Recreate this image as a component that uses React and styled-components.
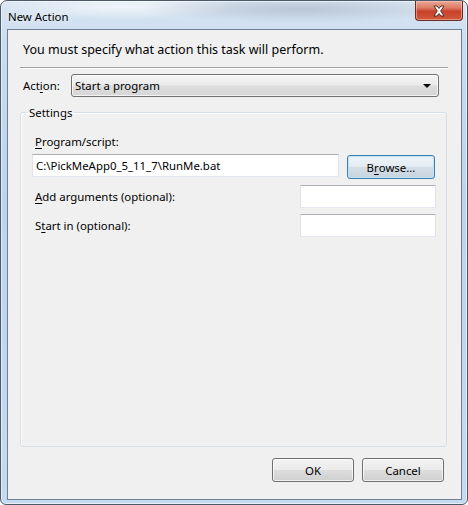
import styled, { createGlobalStyle } from 'styled-components';

const GlobalStyle = createGlobalStyle`
  html, body {
    margin: 0;
    padding: 0;
    background: #ffffff;
  }
  body {
    font-family: "Noto Sans", "Open Sans", sans-serif;
    font-size: 11.4px;
    color: #000;
  }
`;

const Window = styled.div`
  box-sizing: border-box;
  width: 468px;
  height: 505px;
  border: 1px solid #4b5a6b;
  border-radius: 7px 7px 6px 6px;
  padding: 0 5px 4px 6px;
  display: flex;
  flex-direction: column;
  background:
    radial-gradient(ellipse 160px 14px at 300px 8px, rgba(150, 160, 175, 0.45), transparent),
    radial-gradient(ellipse 120px 12px at 120px 6px, rgba(255, 255, 255, 0.6), transparent),
    linear-gradient(180deg, #dbe7f3 0%, #c9dcef 8%, #bdd4ec 40%, #c6daef 100%);
  box-shadow: inset 0 0 0 1px rgba(255, 255, 255, 0.55);
`;

const TitleBar = styled.div`
  height: 28px;
  display: flex;
  align-items: flex-start;
  justify-content: space-between;
  margin-right: -1px;
`;

const Title = styled.span`
  align-self: center;
  padding: 2px 0 0 1px;
  line-height: 15px;
  color: #000;
  text-shadow: 0 0 6px rgba(255, 255, 255, 0.9);
`;

const CloseButton = styled.div`
  box-sizing: border-box;
  width: 48px;
  height: 20px;
  display: flex;
  align-items: center;
  justify-content: center;
  border: 1px solid #6b2e24;
  border-top: none;
  border-radius: 0 0 4px 4px;
  background: linear-gradient(180deg, #e9a897 0%, #dc7d67 35%, #c8412a 55%, #d15a3c 100%);
  box-shadow: inset 0 0 0 1px rgba(255, 220, 210, 0.45);
`;

const Client = styled.div`
  flex: 1;
  display: flex;
  flex-direction: column;
  border: 1px solid #6f8093;
  background: #f0f0f0;
  padding: 0 12px 17px;
`;

const Instruction = styled.div`
  margin: 12px 0 0 3px;
  font-size: 12.5px;
  line-height: 15px;
`;

const Separator = styled.div`
  margin: 10px 1px 0 0;
  border-top: 1px solid #a0a0a0;
  border-bottom: 1px solid #ffffff;
`;

const ActionRow = styled.div`
  margin-top: 5px;
  display: flex;
  align-items: center;
`;

const Label = styled.span`
  margin-left: 3px;
  line-height: 15px;
  width: ${(p) => (p.$width ? `${p.$width}px` : 'auto')};
  flex: ${(p) => (p.$grow ? 1 : 'none')};
`;

const Key = styled.span`
  text-decoration: underline;
  text-underline-offset: 2px;
`;

const Combo = styled.div`
  box-sizing: border-box;
  width: 368px;
  height: 23px;
  display: flex;
  align-items: center;
  justify-content: space-between;
  padding: 0 7px 0 3px;
  border: 1px solid #707070;
  border-radius: 3px;
  background: linear-gradient(180deg, #f3f3f3 0%, #ebebeb 48%, #dddddd 52%, #d6d6d6 100%);
  box-shadow: inset 0 0 0 1px rgba(255, 255, 255, 0.7);
`;

const Arrow = styled.span`
  width: 0;
  height: 0;
  border-left: 4px solid transparent;
  border-right: 4px solid transparent;
  border-top: 4px solid #000;
`;

const Group = styled.fieldset`
  flex: 1;
  min-width: 0;
  width: 427px;
  box-sizing: border-box;
  margin: 8px 0 0;
  padding: 0;
  border: 1px solid #d5dfe5;
  border-radius: 3px;
  box-shadow: inset 1px 1px 0 #ffffff;
  display: flex;
  flex-direction: column;
`;

const Legend = styled.legend`
  margin-left: 6px;
  padding: 0 2px;
  line-height: 15px;
`;

const GroupBody = styled.div`
  padding: 14px 10px 0 11px;
  display: flex;
  flex-direction: column;
`;

const ProgramRow = styled.div`
  margin-top: 5px;
  display: flex;
  align-items: flex-start;
  gap: 8px;
`;

const FieldRow = styled.div`
  margin-top: ${(p) => p.$gap}px;
  height: 23px;
  display: flex;
  align-items: center;
`;

const TextBox = styled.div`
  box-sizing: border-box;
  width: ${(p) => p.$width}px;
  height: 23px;
  display: flex;
  align-items: center;
  padding: 0 3px;
  background: #ffffff;
  border: 1px solid #e2e3ea;
  border-top-color: #abadb3;
  border-bottom-color: #e3e9ef;
  white-space: nowrap;
`;

const Button = styled.div`
  box-sizing: border-box;
  width: ${(p) => p.$width}px;
  height: 24px;
  margin-top: ${(p) => p.$top || 0}px;
  display: flex;
  align-items: center;
  justify-content: center;
  border: 1px solid ${(p) => (p.$default ? '#3c7fb1' : '#707070')};
  border-radius: 3px;
  background: ${(p) =>
    p.$default
      ? 'linear-gradient(180deg, #eef4f9 0%, #e3ebf2 48%, #d3dee7 52%, #c8d4de 100%)'
      : 'linear-gradient(180deg, #f2f2f2 0%, #ebebeb 48%, #dddddd 52%, #cfcfcf 100%)'};
  box-shadow: inset 0 0 0 1px
    ${(p) => (p.$default ? 'rgba(190, 228, 248, 0.95)' : 'rgba(255, 255, 255, 0.7)')};
`;

const ButtonRow = styled.div`
  margin: 11px 5px 0 0;
  display: flex;
  justify-content: flex-end;
  gap: 8px;
`;

const CloseGlyph = () => (
  <svg width="14" height="12" viewBox="0 0 14 12">
    <path
      d="M2 1 H5 L7 3.5 L9 1 H12 L8.7 6 L12 11 H9 L7 8.5 L5 11 H2 L5.3 6 Z"
      fill="#ffffff"
      stroke="#4a2019"
      strokeWidth="0.9"
      strokeLinejoin="round"
    />
  </svg>
);

const App = () => {
  return (
    <>
      <GlobalStyle />
      <Window>
        <TitleBar>
          <Title>New Action</Title>
          <CloseButton>
            <CloseGlyph />
          </CloseButton>
        </TitleBar>
        <Client>
          <Instruction>You must specify what action this task will perform.</Instruction>
          <Separator />
          <ActionRow>
            <Label $width={48}>
              Act<Key>i</Key>on:
            </Label>
            <Combo>
              <span>Start a program</span>
              <Arrow />
            </Combo>
          </ActionRow>
          <Group>
            <Legend>Settings</Legend>
            <GroupBody>
              <Label>
                <Key>P</Key>rogram/script:
              </Label>
              <ProgramRow>
                <TextBox $width={307}>C:\PickMeApp0_5_11_7\RunMe.bat</TextBox>
                <Button $width={88} $top={1} $default>
                  B<Key>r</Key>owse...
                </Button>
              </ProgramRow>
              <FieldRow $gap={6}>
                <Label $grow>
                  <Key>A</Key>dd arguments (optional):
                </Label>
                <TextBox $width={136} />
              </FieldRow>
              <FieldRow $gap={6}>
                <Label $grow>
                  S<Key>t</Key>art in (optional):
                </Label>
                <TextBox $width={136} />
              </FieldRow>
            </GroupBody>
          </Group>
          <ButtonRow>
            <Button $width={82}>OK</Button>
            <Button $width={82}>Cancel</Button>
          </ButtonRow>
        </Client>
      </Window>
    </>
  );
};

export default App;
